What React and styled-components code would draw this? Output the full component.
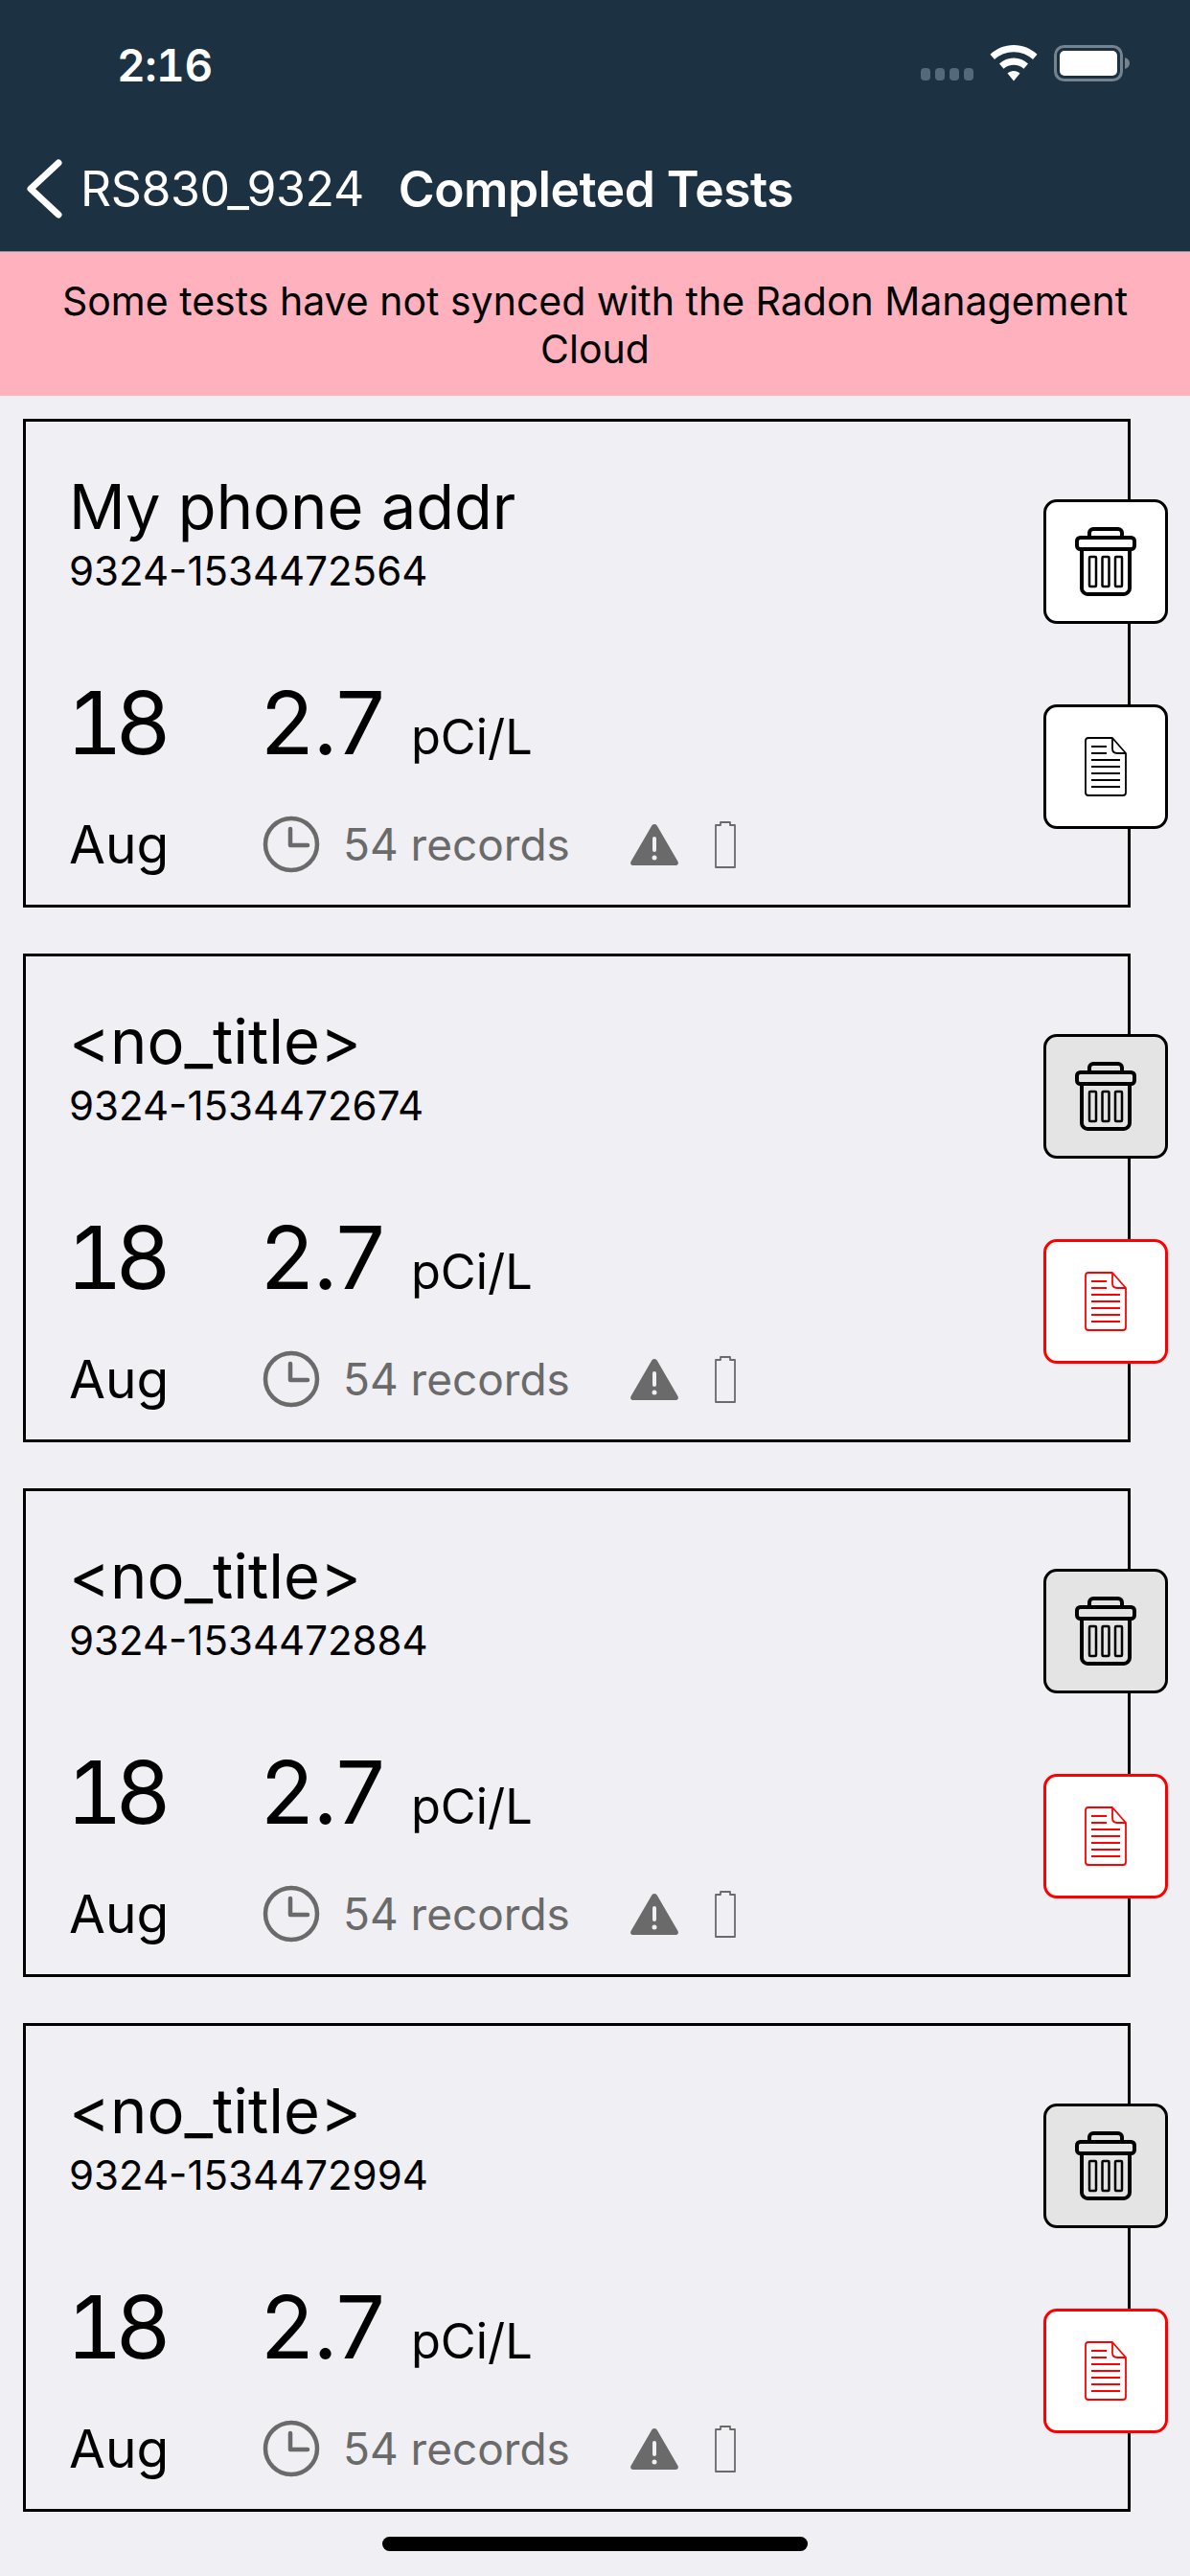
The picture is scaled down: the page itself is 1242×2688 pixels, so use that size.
import React from "react";
import styled, { createGlobalStyle } from "styled-components";

const Global = createGlobalStyle`
  html, body { margin: 0; padding: 0; background: #efeff4; }
  body { font-family: Inter, "Liberation Sans", sans-serif; }
`;

const Page = styled.div`
  position: relative;
  width: 1242px;
  height: 2688px;
  overflow: hidden;
  background: #efeff4;
`;
const Header = styled.header`
  height: 263px;
  box-sizing: border-box;
  background: #1c3243;
  border-bottom: 1px solid #8d99a3;
  display: flex;
  flex-direction: column;
  color: #fff;
`;
const StatusBar = styled.div`
  height: 153px;
  box-sizing: border-box;
  padding: 43px 62px 0 122px;
  display: flex;
  justify-content: space-between;
  align-items: flex-start;
`;
const Time = styled.span`
  font-size: 46px;
  line-height: 50px;
  font-weight: 600;
  letter-spacing: -0.5px;
  font-variant-numeric: tabular-nums;
`;
const StatusIcons = styled.div`
  display: flex;
  align-items: flex-start;
  margin-top: 4px;
`;
const NavBar = styled.nav`
  display: flex;
  align-items: center;
  height: 88px;
  padding-left: 27px;
`;
const BackLabel = styled.span`
  font-size: 50px;
  font-weight: 400;
  margin-left: 19px;
  letter-spacing: -0.4px;
`;
const NavTitle = styled.span`
  font-size: 51.500px;
  font-weight: 600;
  margin-left: 36px;
  letter-spacing: -0.5px;
`;
const Banner = styled.div`
  height: 150px;
  box-sizing: border-box;
  padding: 26px 30px 0;
  background: #ffb1be;
  color: #000;
  text-align: center;
  font-size: 41px;
  line-height: 50px;
`;
const List = styled.main`
  display: flex;
  flex-direction: column;
  gap: 48px;
  padding: 24px 0 0 24px;
`;
const Card = styled.article`
  position: relative;
  box-sizing: border-box;
  width: 1156px;
  height: 510px;
  border: 3px solid #000;
  padding: 51px 0 0 45px;
  color: #000;
`;
const Title = styled.div`
  font-size: 65px;
  line-height: 76px;
`;
const Serial = styled.div`
  font-size: 42px;
  line-height: 46px;
  margin-top: 6px;
`;
const Metrics = styled.div`
  display: grid;
  grid-template-columns: 202px auto;
  row-gap: 37px;
  margin-top: 80px;
`;
const Big = styled.span`
  font-size: 91px;
  line-height: 110px;
  letter-spacing: -1px;
`;
const Day = styled(Big)`
  font-variant-numeric: tabular-nums;
  letter-spacing: -8px;
  margin-left: -3px;
`;
const Reading = styled.div`
  display: flex;
  align-items: baseline;
  gap: 28px;
  margin-left: -2px;
`;
const Unit = styled.span`
  font-size: 50.500px;
`;
const Month = styled.span`
  font-size: 55px;
  line-height: 70px;
`;
const Details = styled.div`
  display: flex;
  align-items: center;
  height: 70px;
  color: #6a6a6a;
`;
const Records = styled.span`
  font-size: 46px;
  margin: 0 62px 0 24px;
`;
const Actions = styled.div`
  position: absolute;
  top: 81px;
  right: -42px;
  display: flex;
  flex-direction: column;
  gap: 84px;
`;
const ActionButton = styled.button`
  width: 130px;
  height: 130px;
  padding: 0;
  box-sizing: border-box;
  border-radius: 14px;
  border: 3px solid ${(p) => (p.$danger ? "#ff0000" : "#000")};
  background: ${(p) => (p.$pressed ? "#e4e4e4" : "#fff")};
  color: ${(p) => (p.$danger ? "#ff0000" : "#000")};
  display: flex;
  align-items: center;
  justify-content: center;
`;
const HomeBar = styled.div`
  position: absolute;
  left: 399px;
  top: 2647px;
  width: 444px;
  height: 15px;
  border-radius: 8px;
  background: #000;
`;

const Signal = () => (
  <svg width="58" height="16" viewBox="0 0 58 16" style={{ marginTop: 23, marginRight: 14 }}>
    {[0, 15, 30, 45].map((x) => (
      <rect key={x} x={x} y="1" width="10" height="13" rx="4" fill="#56697a" />
    ))}
  </svg>
);
const Wifi = () => (
  <svg width="50" height="38" viewBox="0 0 50 38" fill="#fff" style={{ marginRight: 17 }}>
    <path d="M25 0c9.500 0 18 3.700 24.500 9.700L45 15C39.700 10 32.700 7.200 25 7.200S10.300 10 5 15L.5 9.700C7 3.700 15.500 0 25 0z" />
    <path d="M25 13.500c5.800 0 11 2.200 15 5.900l-4.500 5.300c-2.800-2.500-6.500-4-10.500-4s-7.700 1.500-10.500 4L10 19.400c4-3.700 9.200-5.900 15-5.900z" />
    <path d="M25 27c2.500 0 4.800.9 6.500 2.500L25 37.500l-6.500-8C20.200 27.900 22.500 27 25 27z" />
  </svg>
);
const Battery = () => (
  <svg width="80" height="38" viewBox="0 0 80 38">
    <rect x="1.500" y="1.500" width="69" height="35" rx="9" fill="none" stroke="#75838f" strokeWidth="3" />
    <rect x="6" y="6" width="60" height="26" rx="5" fill="#fff" />
    <path d="M74 13c3 1 5 3 5 6s-2 5-5 6z" fill="#75838f" />
  </svg>
);
const Chevron = () => (
  <svg width="38" height="62" viewBox="0 0 38 62" fill="none" stroke="#fff" strokeWidth="7" strokeLinecap="round" strokeLinejoin="round">
    <path d="M34 4 5 31l29 27" />
  </svg>
);
const ClockIcon = () => (
  <svg width="60" height="60" viewBox="0 0 60 60" fill="none" stroke="currentColor" strokeWidth="4.500" strokeLinecap="round" strokeLinejoin="round">
    <circle cx="30" cy="30" r="27" />
    <path d="M29 14v17h18" />
  </svg>
);
const WarnIcon = () => (
  <svg width="52" height="46" viewBox="0 0 52 46" style={{ marginRight: 36 }}>
    <path d="M26 2c1.500 0 2.400.9 3 2l21.500 37c1 2 0 4-2.500 4H4c-2.500 0-3.500-2-2.500-4L23 4c.6-1.100 1.500-2 3-2z" fill="currentColor" />
    <rect x="24" y="15" width="4" height="16" rx="2" fill="#efeff4" />
    <circle cx="26" cy="37" r="2.500" fill="#efeff4" />
  </svg>
);
const EmptyBattery = () => (
  <svg width="24" height="50" viewBox="0 0 24 50" fill="none" stroke="currentColor" strokeWidth="1.800">
    <path d="M2 5h5V2h10v3h5v44H2z" strokeLinejoin="round" />
  </svg>
);
const TrashIcon = () => (
  <svg width="64" height="72" viewBox="0 0 64 72" fill="none" stroke="currentColor" strokeWidth="4" strokeLinejoin="round">
    <path d="M15 11V6c0-2 2-4 4-4h26c2 0 4 2 4 4v5" />
    <rect x="2" y="11" width="60" height="12" rx="3.500" />
    <path d="M7 23v41c0 3 3 6 6 6h38c3 0 6-3 6-6V23" />
    <g strokeWidth="2.500">
      <rect x="15" y="31" width="7" height="31" rx="1" />
      <rect x="28.500" y="31" width="7" height="31" rx="1" />
      <rect x="42" y="31" width="7" height="31" rx="1" />
    </g>
  </svg>
);
const DocIcon = () => (
  <svg width="44" height="62" viewBox="0 0 44 62" fill="none" stroke="currentColor" strokeLinejoin="round">
    <path strokeWidth="1.800" d="M29 1H4C2 1 1 2 1 4v54c0 2 1 3 3 3h36c2 0 3-1 3-3V17z" />
    <path strokeWidth="1.800" d="M29 1v11c0 3 2 5 5 5h9" />
    <path strokeWidth="2" d="M7 10h16M7 17h16M7 24h30M7 31h30M7 38h30M7 45h30M7 52h30" />
  </svg>
);

const tests = [
  { title: "My phone addr", serial: "9324-1534472564", synced: true },
  { title: "<no_title>", serial: "9324-1534472674" },
  { title: "<no_title>", serial: "9324-1534472884" },
  { title: "<no_title>", serial: "9324-1534472994" },
];

export default function App() {
  return (
    <Page>
      <Global />
      <Header>
        <StatusBar>
          <Time>2:16</Time>
          <StatusIcons>
            <Signal />
            <Wifi />
            <Battery />
          </StatusIcons>
        </StatusBar>
        <NavBar>
          <Chevron />
          <BackLabel>RS830_9324</BackLabel>
          <NavTitle>Completed Tests</NavTitle>
        </NavBar>
      </Header>
      <Banner>Some tests have not synced with the Radon Management Cloud</Banner>
      <List>
        {tests.map((t) => (
          <Card key={t.serial}>
            <Title>{t.title}</Title>
            <Serial>{t.serial}</Serial>
            <Metrics>
              <Day>18</Day>
              <Reading>
                <Big>2.7</Big>
                <Unit>pCi/L</Unit>
              </Reading>
              <Month>Aug</Month>
              <Details>
                <ClockIcon />
                <Records>54 records</Records>
                <WarnIcon />
                <EmptyBattery />
              </Details>
            </Metrics>
            <Actions>
              <ActionButton $pressed={!t.synced}>
                <TrashIcon />
              </ActionButton>
              <ActionButton $danger={!t.synced}>
                <DocIcon />
              </ActionButton>
            </Actions>
          </Card>
        ))}
      </List>
      <HomeBar />
    </Page>
  );
}
